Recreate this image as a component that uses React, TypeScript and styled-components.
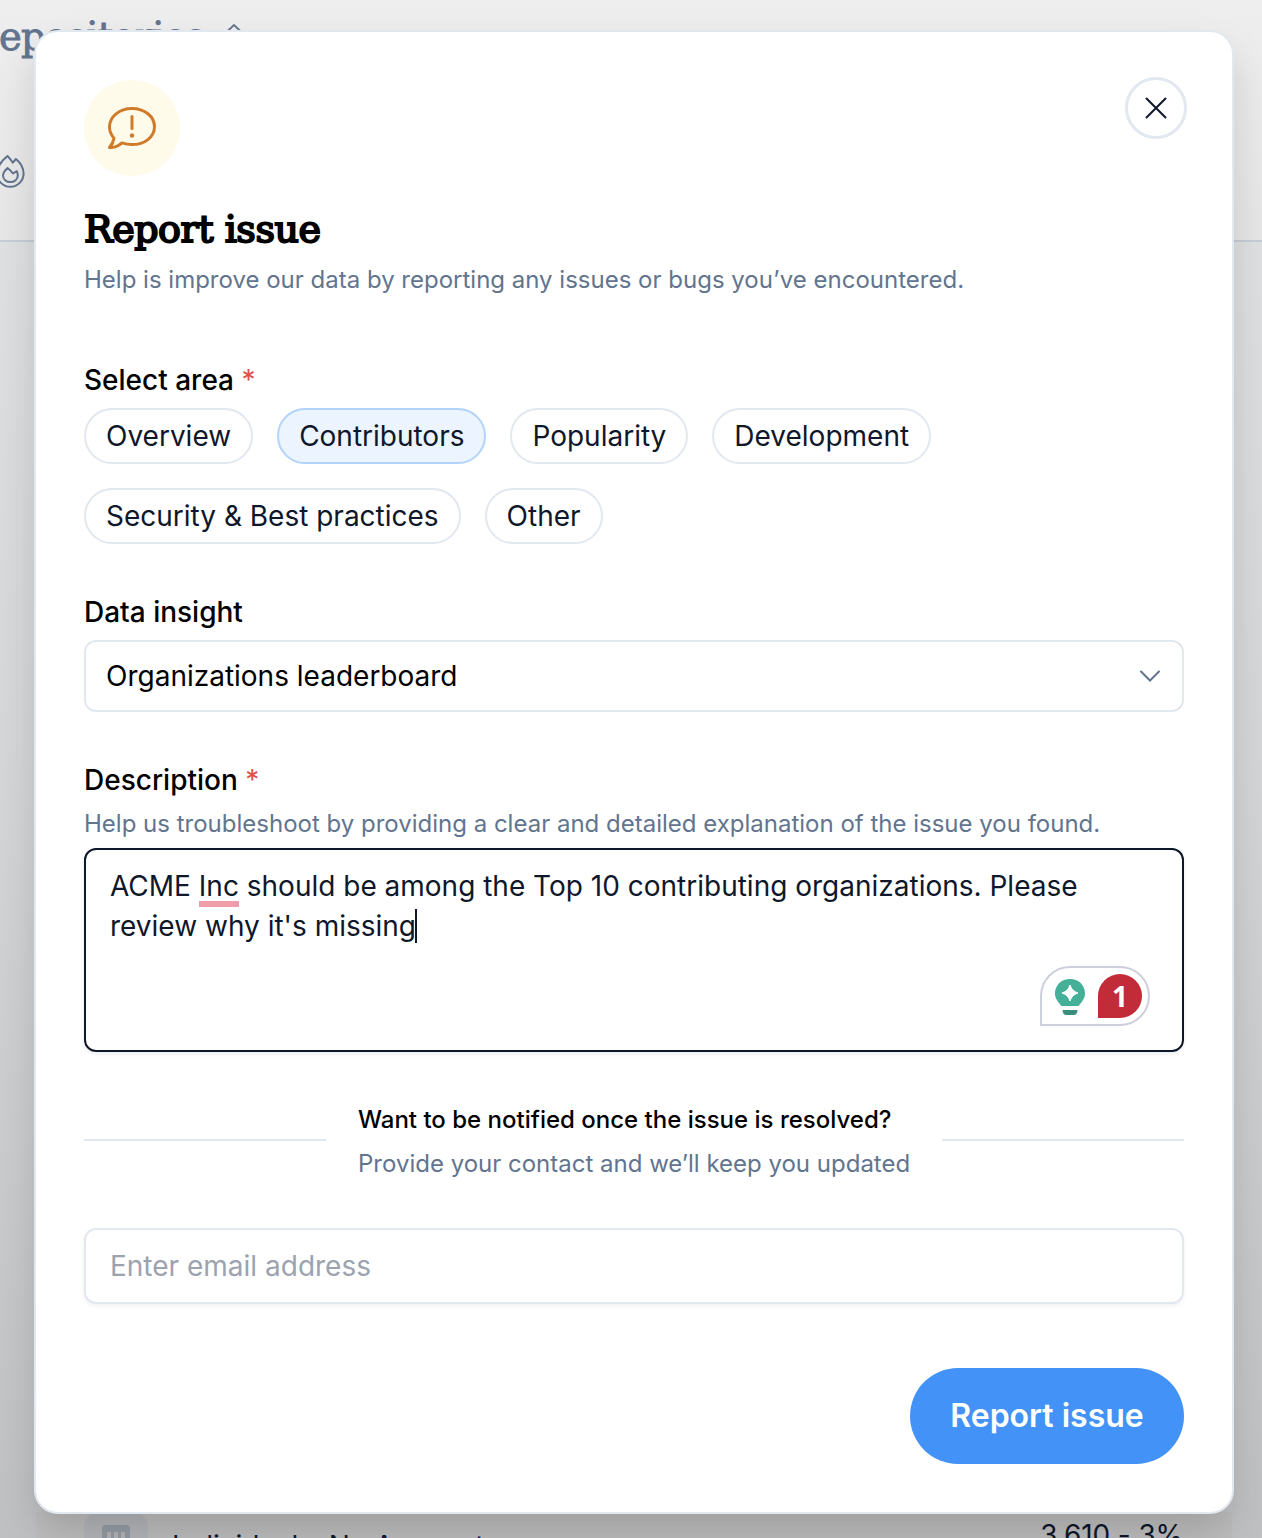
import React from "react";
import styled, { createGlobalStyle } from "styled-components";

const GlobalStyle = createGlobalStyle`
  * { box-sizing: border-box; }
  body { margin: 0; font-family: Inter, "Liberation Sans", sans-serif; color: #0f172a; }
`;

const Root = styled.div`
  position: relative;
  width: 1262px;
  height: 1538px;
  overflow: hidden;
  background: #dcddde;
`;

const Page = styled.div`
  display: flex;
  flex-direction: column;
  height: 100%;
`;

const PageHeader = styled.div`
  height: 242px;
  border-bottom: 2px solid #c8cdd5;
  background: linear-gradient(#eeeeee, #e6e6e6);
`;

const PageTitle = styled.div`
  display: flex;
  align-items: center;
  gap: 20px;
  height: 74px;
  margin-left: -1px;
  color: #62748e;
  font: 400 38.5px/74px "Roboto Slab", "DejaVu Serif", serif;
  letter-spacing: -0.8px;
  -webkit-text-stroke: 0.9px currentColor;

  svg {
    margin-bottom: 17px;
  }
`;

const TabRow = styled.div`
  display: flex;
  align-items: center;
  height: 194px;
  margin-left: -6px;
  color: #62748e;
`;

const PageBody = styled.div`
  display: flex;
  flex-direction: column;
  justify-content: flex-end;
  flex: 1;
  padding: 0 30px 0 36px;
  background: linear-gradient(#dfe0e1, #d5d6d8 40%, #bfc0c2);
`;

const ResultRow = styled.div`
  display: flex;
  align-items: flex-start;
  height: 26px;
  padding: 0 49px 0 48px;
  background: #bdbdbd;
  font-size: 28px;
  line-height: 40px;
`;

const Avatar = styled.div`
  display: flex;
  justify-content: center;
  width: 64px;
  height: 64px;
  margin-right: 24px;
  padding-top: 12px;
  border-radius: 16px;
  background: #b3b5b9;
`;

const ResultName = styled.div`
  flex: 1;
  padding-top: 14px;
  letter-spacing: -0.05px;
`;

const ResultValue = styled.div`
  padding-top: 3px;
  letter-spacing: -0.1px;
`;

const Modal = styled.div`
  position: absolute;
  left: 34px;
  top: 30px;
  width: 1200px;
  height: 1484px;
  padding: 48px;
  border: 2px solid #e2e8f0;
  border-radius: 24px;
  background: #fff;
  box-shadow: 0 20px 40px -4px rgba(0, 0, 0, 0.17);
`;

const ModalTop = styled.div`
  display: flex;
  justify-content: space-between;
  align-items: flex-start;
`;

const IssueBadge = styled.div`
  display: grid;
  place-items: center;
  width: 96px;
  height: 96px;
  border-radius: 50%;
  background: #fffbeb;
  color: #d07b2a;
`;

const CloseButton = styled.button`
  display: grid;
  place-items: center;
  width: 62px;
  height: 62px;
  margin: -3px -3px 0 0;
  padding: 0;
  border: 3px solid #e2e8f0;
  border-radius: 50%;
  background: #fff;
  color: #0f172a;
`;

const Title = styled.h1`
  margin: 28px 0 12px;
  color: #000;
  font: 400 38px/50px "Roboto Slab", "DejaVu Serif", serif;
  height: 48px;
  letter-spacing: -0.45px;
  -webkit-text-stroke: 2px currentColor;
  white-space: nowrap;
`;

const Hint = styled.p`
  margin: 0;
  color: #62748e;
  font-size: 24px;
  line-height: 32px;
  white-space: nowrap;
`;

const Field = styled.section<{ $top: number }>`
  display: flex;
  flex-direction: column;
  gap: 8px;
  margin-top: ${(p) => p.$top}px;
`;

const Label = styled.div`
  color: #000;
  font-size: 28px;
  font-weight: 500;
  line-height: 40px;
`;

const Required = styled.span`
  color: #e2504a;
  font-weight: 400;
`;

const Chips = styled.div`
  display: flex;
  flex-wrap: wrap;
  gap: 24px;
  width: 900px;
`;

const Chip = styled.button<{ $active?: boolean }>`
  height: 56px;
  padding: 0 20px;
  border: 2px solid ${(p) => (p.$active ? "#b2d3fd" : "#e2e8f0")};
  border-radius: 28px;
  background: ${(p) => (p.$active ? "#ecf4ff" : "#fff")};
  color: #0f172a;
  font: 400 28px/40px Inter, sans-serif;
  letter-spacing: -0.005px;
`;

const Select = styled.div`
  display: flex;
  align-items: center;
  justify-content: space-between;
  height: 72px;
  padding: 0 22px 0 20px;
  border: 2px solid #e2e8f0;
  border-radius: 12px;
  color: #000;
  font-size: 28px;
`;

const TextArea = styled.div`
  position: relative;
  height: 204px;
  padding: 16px 24px;
  border: 2px solid #0f172a;
  border-radius: 12px;
  font-size: 28px;
  line-height: 40px;
  box-shadow: 0 2px 4px rgba(15, 23, 42, 0.08);
`;

const Flagged = styled.span`
  background: linear-gradient(#f09dab, #f09dab) 0 100% / 100% 6px no-repeat;
  padding-bottom: 4px;
`;

const Caret = styled.span`
  display: inline-block;
  width: 2px;
  height: 34px;
  margin: 0 -2px 0 -1px;
  vertical-align: -7px;
  background: #0f172a;
`;

const Checker = styled.div`
  position: absolute;
  right: 32px;
  bottom: 24px;
  display: flex;
  align-items: center;
  gap: 11px;
  width: 110px;
  height: 60px;
  padding-left: 11px;
  border: 2px solid #cdcfde;
  border-radius: 30px 30px 30px 0;
  background: #fff;
`;

const Count = styled.div`
  width: 44px;
  height: 44px;
  border-radius: 22px 22px 22px 0;
  background: #c22c38;
  color: #fff;
  font: 700 28px/44px "Noto Sans", "Open Sans", sans-serif;
  text-align: center;
`;

const Divider = styled.div`
  display: flex;
  align-items: center;
  gap: 32px;
  height: 80px;
  margin-top: 48px;
`;

const Rule = styled.div`
  flex: 1;
  height: 2px;
  background: #e2e8f0;
`;

const Notice = styled.div`
  width: 552px;
`;

const NoticeTitle = styled.div`
  margin-bottom: 8px;
  color: #000;
  font-size: 24px;
  font-weight: 500;
  line-height: 40px;
  white-space: nowrap;
`;

const EmailInput = styled.input`
  display: block;
  width: 100%;
  height: 76px;
  margin-top: 48px;
  padding: 0 24px;
  border: 2px solid #e2e8f0;
  border-radius: 12px;
  box-shadow: 0 2px 4px rgba(15, 23, 42, 0.06);
  font: 400 28px/40px Inter, sans-serif;
  &::placeholder { color: #9ca3af; }
`;

const Footer = styled.div`
  display: flex;
  justify-content: flex-end;
  margin-top: 64px;
`;

const Submit = styled.button`
  width: 274px;
  height: 96px;
  padding: 0;
  border: 0;
  border-radius: 48px;
  background: #4292f7;
  color: #fff;
  font: 600 32px/48px Inter, sans-serif;
`;

const areas = ["Overview", "Contributors", "Popularity", "Development", "Security & Best practices", "Other"];

export default function App() {
  return (
    <Root>
      <GlobalStyle />
      <Page>
        <PageHeader>
          <PageTitle>
            epositories
            <svg width="18" height="10" viewBox="0 0 18 10" fill="none" stroke="currentColor" strokeWidth="1.8"><path d="M1 8.5 9 1l8 7.5" /></svg>
          </PageTitle>
          <TabRow>
            <svg width="32" height="34" viewBox="0 0 32 34" fill="none" stroke="currentColor" strokeWidth="2" strokeLinejoin="round" strokeLinecap="round">
              <path d="M13.500 2C8 6.500 3 13 3 19.500a13.300 13.300 0 0 0 26.600 0c0-5.500-3.500-11-7.600-14.500l-3.200 3.700C17 6 15.500 4 13.500 2Z" />
              <path d="M13.500 14C11 16.500 9 19 9 21.500a7.300 6.500 0 0 0 14.800 0c0-1.500-.3-3-1-4.300l-3.800 2.300c-1.500-2-3.500-4-5.500-5.500Z" />
            </svg>
          </TabRow>
        </PageHeader>
        <PageBody>
          <ResultRow>
            <Avatar>
              <svg width="28" height="30" viewBox="0 0 28 30"><rect y="1" width="28" height="29" rx="4" fill="#949ba4" /><path d="M5 9a1 1 0 0 1 1-1h2a1 1 0 0 1 1 1v5H5zm7 0a1 1 0 0 1 1-1h2a1 1 0 0 1 1 1v5h-4zm7 0a1 1 0 0 1 1-1h2a1 1 0 0 1 1 1v5h-4z" fill="#b3b5b9" /></svg>
            </Avatar>
            <ResultName>Individuals: No Account</ResultName>
            <ResultValue>3,610 - 3%</ResultValue>
          </ResultRow>
        </PageBody>
      </Page>
      <Modal>
        <ModalTop>
          <IssueBadge>
            <svg width="50" height="44" viewBox="0 0 50 44" fill="none" stroke="currentColor" strokeWidth="3" strokeLinejoin="round" strokeLinecap="round">
              <path d="M25 2.500C12.500 2.500 2.500 10.500 2.500 21c0 4.300 1.600 7.900 4.500 11.200-.5 3.300-2.300 6.600-4.500 9.300 5 .2 9.500-1.800 12.500-4.600 3 1.100 6.400 1.700 10 1.700 12.500 0 22.500-7.500 22.500-17.800S37.500 2.500 25 2.500Z" />
              <path d="M25 10.500v12" /><circle cx="25" cy="29.500" r="2.200" fill="currentColor" stroke="none" />
            </svg>
          </IssueBadge>
          <CloseButton aria-label="Close">
            <svg width="22" height="22" viewBox="0 0 22 22" fill="none" stroke="currentColor" strokeWidth="2" strokeLinecap="round"><path d="m1.500 1.500 19 19m0-19-19 19" /></svg>
          </CloseButton>
        </ModalTop>
        <Title>Report issue</Title>
        <Hint>Help is improve our data by reporting any issues or bugs you’ve encountered.</Hint>
        <Field $top={64}>
          <Label>Select area <Required>*</Required></Label>
          <Chips>
            {areas.map((a) => <Chip key={a} $active={a === "Contributors"}>{a}</Chip>)}
          </Chips>
        </Field>
        <Field $top={48}>
          <Label>Data insight</Label>
          <Select>
            Organizations leaderboard
            <svg width="20" height="12" viewBox="0 0 20 12" fill="none" stroke="#62748e" strokeWidth="2" strokeLinecap="round"><path d="m1 1.500 9 9 9-9" /></svg>
          </Select>
        </Field>
        <Field $top={48}>
          <Label>Description <Required>*</Required></Label>
          <Hint>Help us troubleshoot by providing a clear and detailed explanation of the issue you found.</Hint>
          <TextArea>
            ACME <Flagged>Inc</Flagged> should be among the Top 10 contributing organizations. Please review why it's missing<Caret />
            <Checker>
              <svg width="34" height="44" viewBox="0 0 34 44">
                <path d="M17 5C8.500 5 2 11 2 19.500c0 5.500 3.500 8.500 6.300 12.500h17.400C28.500 28 32 25 32 19.500 32 11 25.500 5 17 5Z" fill="#43b097" />
                <path d="M9.500 36h15c0 3-1.500 5-4 5h-7c-2.500 0-4-2-4-5Z" fill="#3b8d7c" />
                <path d="M17 11c1.600 4.500 3.500 6.400 8 8-4.500 1.600-6.400 3.500-8 8-1.600-4.500-3.500-6.400-8-8 4.500-1.600 6.400-3.500 8-8Z" fill="#fff" stroke="#fff" strokeLinejoin="round" />
              </svg>
              <Count>1</Count>
            </Checker>
          </TextArea>
        </Field>
        <Divider>
          <Rule />
          <Notice>
            <NoticeTitle>Want to be notified once the issue is resolved?</NoticeTitle>
            <Hint>Provide your contact and we’ll keep you updated</Hint>
          </Notice>
          <Rule />
        </Divider>
        <EmailInput placeholder="Enter email address" />
        <Footer><Submit>Report issue</Submit></Footer>
      </Modal>
    </Root>
  );
}
